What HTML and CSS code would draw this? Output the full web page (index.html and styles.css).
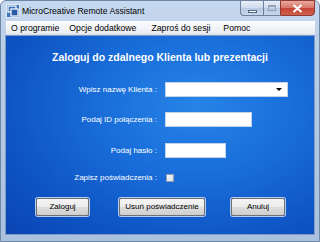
FILE: index.html
```html
<!DOCTYPE html>
<html lang="pl">
<head>
<meta charset="utf-8">
<title>MicroCreative Remote Assistant</title>
<link rel="stylesheet" href="styles.css">
</head>
<body>
<div class="window">
  <div class="titlebar">
    <svg class="app-icon" width="14" height="14" viewBox="0 0 14 14">
      <rect x="0.5" y="0.5" width="13" height="13" fill="#3f74bf" stroke="#dfe8f4"/>
      <rect x="2" y="2" width="8" height="6" fill="none" stroke="#ffffff" stroke-width="1.2"/>
      <rect x="5" y="5" width="7" height="7" fill="#2a5ca8" stroke="#ffffff" stroke-width="1.2"/>
    </svg>
    <span class="title">MicroCreative Remote Assistant</span>
    <div class="caption-buttons">
      <div class="cbtn cbtn-min"><span class="glyph-min"></span></div>
      <div class="cbtn cbtn-max"><span class="glyph-max"></span></div>
      <div class="cbtn cbtn-close">
        <svg width="11" height="9" viewBox="0 0 11 9"><path d="M1.5 1 L9.5 8 M9.5 1 L1.5 8" stroke="#ffffff" stroke-width="2.2"/></svg>
      </div>
    </div>
  </div>
  <div class="menubar">
    <span class="menu-item">O programie</span>
    <span class="menu-item">Opcje dodatkowe</span>
    <span class="menu-item">Zaproś do sesji</span>
    <span class="menu-item">Pomoc</span>
  </div>
  <div class="content">
    <h1 class="heading">Zaloguj do zdalnego Klienta lub prezentacji</h1>
    <div class="form">
      <div class="row">
        <label class="label">Wpisz nazwę Klienta :</label>
        <div class="field combo"><span class="arrow"></span></div>
      </div>
      <div class="row">
        <label class="label">Podaj ID połączenia :</label>
        <div class="field input-id"></div>
      </div>
      <div class="row row-pass">
        <label class="label">Podaj hasło :</label>
        <div class="field input-pass"></div>
      </div>
      <div class="row row-check">
        <label class="label">Zapisz poświadczenia :</label>
        <div class="checkbox"></div>
      </div>
    </div>
    <div class="buttons">
      <div class="btn btn-login">Zaloguj</div>
      <div class="btn btn-remove">Usuń poświadczenie</div>
      <div class="btn btn-cancel">Anuluj</div>
    </div>
  </div>
</div>
</body>
</html>
```
FILE: styles.css
```css
* { box-sizing: border-box; }
html, body { margin: 0; padding: 0; }
body {
  width: 320px;
  height: 242px;
  overflow: hidden;
  font-family: "Liberation Sans", Arial, sans-serif;
  background: #ffffff;
}
.window {
  width: 320px;
  height: 242px;
  background: linear-gradient(180deg, #c7d9ef 0%, #b9cde6 20%, #aac1de 100%);
  border: 1px solid #6f87a6;
  border-radius: 6px 6px 0 0;
  display: flex;
  flex-direction: column;
}
.titlebar {
  height: 20px;
  display: flex;
  align-items: flex-start;
  position: relative;
}
.app-icon {
  margin: 3px 0 0 5px;
  flex: none;
}
.title {
  margin: 4px 0 0 2px;
  font-size: 8.6px;
  line-height: 12px;
  color: #000000;
}
.caption-buttons {
  position: absolute;
  top: -1px;
  right: 4px;
  display: flex;
}
.cbtn {
  height: 16px;
  border: 1px solid #6c819d;
  display: flex;
  align-items: center;
  justify-content: center;
}
.cbtn-min {
  width: 23px;
  border-radius: 0 0 0 4px;
  border-right: none;
  background: linear-gradient(180deg, #e6eef8 0%, #cfdced 50%, #b8cae0 51%, #c9d8ea 100%);
}
.cbtn-max {
  width: 17px;
  border-right: none;
  background: linear-gradient(180deg, #e6eef8 0%, #cfdced 50%, #b8cae0 51%, #c9d8ea 100%);
}
.cbtn-close {
  width: 35px;
  border-color: #8e3a33;
  border-radius: 0 0 4px 0;
  background: linear-gradient(180deg, #e9a99f 0%, #d77567 50%, #c44234 51%, #d0604f 100%);
}
.glyph-min {
  width: 9px;
  height: 3px;
  margin-top: 6px;
  background: #ffffff;
  border: 1px solid #4f6684;
}
.glyph-max {
  width: 8px;
  height: 6px;
  border: 1px solid #8ea2bd;
  border-top-width: 2px;
}
.menubar {
  height: 14px;
  margin: 0 4px 0 5px;
  background: linear-gradient(180deg, #fbfcfd 0%, #f1f3f7 60%, #e6eaf0 100%);
  border-bottom: 1px solid #d7dee8;
  display: flex;
  align-items: center;
  font-size: 8.7px;
  color: #000000;
}
.menu-item {
  line-height: 12px;
}
.menu-item:nth-child(1) { margin-left: 5px; }
.menu-item:nth-child(2) { margin-left: 10px; }
.menu-item:nth-child(3) { margin-left: 15px; }
.menu-item:nth-child(4) { margin-left: 13px; }
.content {
  flex: 1;
  margin: 0 4px 6px 4px;
  border: 1px solid #7f9cc6;
  background: radial-gradient(ellipse 85% 95% at 62% 35%, #2784e6 0%, #1a6fdb 35%, #0f56c7 70%, #0a44b2 100%);
  display: flex;
  flex-direction: column;
}
.heading {
  margin: 15px 0 0 0;
  font-size: 10.5px;
  line-height: 12px;
  font-weight: bold;
  color: #ffffff;
  text-align: center;
}
.form {
  margin-top: 19px;
  display: flex;
  flex-direction: column;
}
.row {
  height: 15px;
  display: flex;
  align-items: center;
}
.row + .row { margin-top: 15px; }
.row.row-pass { margin-top: 16px; }
.row.row-check { margin-top: 12px; }
.label {
  width: 151px;
  text-align: right;
  font-size: 8px;
  line-height: 10px;
  color: #ffffff;
  flex: none;
}
.field {
  margin-left: 8px;
  height: 15px;
  background: #ffffff;
  border: 1px solid #c3d2e8;
}
.combo {
  width: 123px;
  position: relative;
}
.arrow {
  position: absolute;
  right: 5px;
  top: 5px;
  width: 0;
  height: 0;
  border-left: 3px solid transparent;
  border-right: 3px solid transparent;
  border-top: 3px solid #000000;
}
.input-id { width: 87px; }
.input-pass { width: 61px; }
.checkbox {
  margin-left: 9px;
  width: 8px;
  height: 8px;
  border: 1px solid #8d9db4;
  background: linear-gradient(135deg, #f4f6f9 0%, #d9e0ea 100%);
}
.buttons {
  margin-top: 13px;
  display: flex;
}
.btn {
  height: 18px;
  border: 1px solid #707070;
  border-radius: 2px;
  box-shadow: 0 0 0 1px #b4cdef;
  background: linear-gradient(180deg, #f5f5f5 0%, #ebebeb 50%, #dddddd 51%, #cfcfcf 100%);
  font-size: 8px;
  line-height: 16px;
  color: #000000;
  text-align: center;
}
.btn-login { margin-left: 30px; width: 53px; }
.btn-remove { margin-left: 30px; width: 86px; }
.btn-cancel { margin-left: 26px; width: 54px; }
```
